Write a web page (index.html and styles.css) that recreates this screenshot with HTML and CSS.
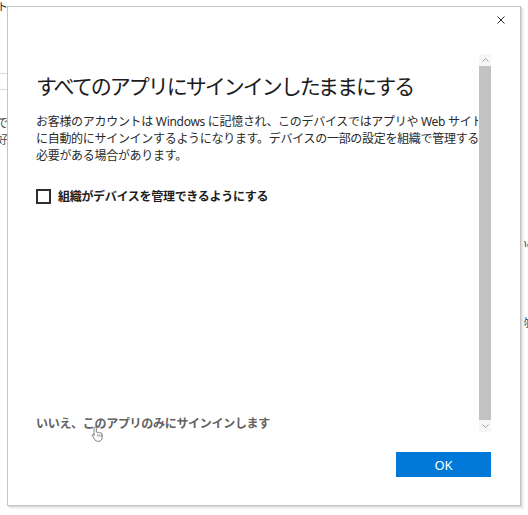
FILE: index.html
```html
<!DOCTYPE html>
<html lang="ja">
<head>
<meta charset="utf-8">
<title>サインイン</title>
<link rel="stylesheet" href="styles.css">
</head>
<body>
<div class="backdrop">
  <div class="pane-left">
    <div class="frag frag-top"><span>ト</span></div>
    <div class="rule rule-a"></div>
    <div class="rule rule-b"></div>
    <div class="frag frag-text"><span>設定で</span></div>
    <div class="frag frag-text2"><span>お好</span></div>
  </div>
  <div class="pane-mid"></div>
  <div class="pane-right">
    <div class="rfrag rfrag-a">name</div>
    <div class="rfrag rfrag-b">称号</div>
  </div>
</div>

<div class="dialog" role="dialog">
  <div class="titlebar">
    <svg class="close" width="8" height="8" viewBox="0 0 8 8" aria-label="閉じる">
      <path d="M0.5 0.5 L7.5 7.5 M7.5 0.5 L0.5 7.5" stroke="#2b2b2b" stroke-width="1" fill="none"/>
    </svg>
  </div>
  <div class="body">
    <div class="content">
      <h1 class="title">すべてのアプリにサインインしたままにする</h1>
      <div class="para">
        <div class="line">お客様のアカウントは Windows に記憶され、このデバイスではアプリや Web サイト</div>
        <div class="line">に自動的にサインインするようになります。デバイスの一部の設定を組織で管理する</div>
        <div class="line">必要がある場合があります。</div>
      </div>
      <label class="check">
        <span class="box"></span>
        <span class="check-label">組織がデバイスを管理できるようにする</span>
      </label>
      <div class="link">いいえ、このアプリのみにサインインします</div>
    </div>
    <div class="scrollbar">
      <div class="arrow">
        <svg width="7" height="4" viewBox="0 0 7 4"><path d="M0.5 3.5 L3.5 0.5 L6.5 3.5" stroke="#a0a0a0" fill="none"/></svg>
      </div>
      <div class="thumb"></div>
      <div class="arrow">
        <svg width="7" height="4" viewBox="0 0 7 4"><path d="M0.5 0.5 L3.5 3.5 L6.5 0.5" stroke="#a0a0a0" fill="none"/></svg>
      </div>
    </div>
  </div>
  <div class="footer">
    <button class="ok">OK</button>
  </div>
  <svg class="cursor" width="13" height="18" viewBox="0 0 17 22">
    <path d="M5.5 1.5c.8 0 1.5.6 1.5 1.5v5.5h.5c.8 0 1.3.5 1.5 1 .3-.4.8-.6 1.3-.6.8 0 1.3.5 1.5 1.1.3-.3.7-.5 1.2-.5 1 0 1.5.8 1.5 1.6V16c0 2.5-1.7 4.5-4.2 4.5H8.5c-1.5 0-2.5-.7-3.3-1.8L1.8 13.5c-.5-.8-.3-1.6.4-2 .7-.4 1.5-.2 2 .5L4 13V3c0-.9.7-1.5 1.5-1.5z" fill="#fff" stroke="#6a6a6a" stroke-width="1.1"/>
    <path d="M9 11v3.5M11.5 11.5v3M14 12v2.5" stroke="#6a6a6a" stroke-width="1"/>
  </svg>
</div>
</body>
</html>
```
FILE: styles.css
```css
* { box-sizing: border-box; }
html, body {
  margin: 0;
  padding: 0;
  background: #ffffff;
}
body {
  width: 528px;
  height: 515px;
  overflow: hidden;
  font-family: "Noto Sans", "Noto Sans CJK JP", sans-serif;
  position: relative;
}

/* background application behind the dialog */
.backdrop {
  display: flex;
  height: 515px;
}
.pane-left {
  width: 8px;
  overflow: hidden;
  position: relative;
}
.frag {
  display: flex;
  justify-content: flex-end;
  white-space: nowrap;
  color: #444;
  font-size: 11px;
  line-height: 14px;
}
.frag-top { margin-top: 0; height: 14px; color: #222; }
.rule { height: 1px; background: #dcdcdc; width: 8px; }
.rule-a { margin-top: 59px; }
.rule-b { margin-top: 15px; }
.frag-text { margin-top: 26px; }
.frag-text2 { margin-top: 3px; }
.pane-mid { width: 512px; }
.pane-right {
  flex: 1;
  overflow: hidden;
  white-space: nowrap;
  color: #444;
  font-size: 11px;
  line-height: 14px;
}
.rfrag-a { margin-top: 236px; }
.rfrag-b { margin-top: 66px; }

/* dialog */
.dialog {
  position: absolute;
  left: 7px;
  top: 6px;
  width: 514px;
  background: #ffffff;
  border: 1px solid #c4c4c4;
  box-shadow: 1px 1px 0 #dadada, 2px 2px 0 #ececec, 3px 3px 1px #f4f4f4;
  display: flex;
  flex-direction: column;
}
.titlebar {
  height: 47px;
  display: flex;
  justify-content: flex-end;
  align-items: flex-start;
  padding: 9px 15px 0 0;
}
.close { display: block; }

.body {
  height: 378px;
  display: flex;
}
.content {
  flex: 1;
  min-width: 0;
  overflow: hidden;
  padding: 18px 0 0 28px;
  display: flex;
  flex-direction: column;
}
.title {
  margin: 0;
  font-size: 21px;
  line-height: 28px;
  font-weight: 400;
  letter-spacing: -2px;
  color: #1b1b1b;
  white-space: nowrap;
}
.para {
  margin-top: 13px;
  font-size: 12px;
  line-height: 17px;
  letter-spacing: -0.3px;
  color: #2a2a2a;
}
.line { white-space: nowrap; }

.check {
  margin-top: 22px;
  height: 20px;
  display: flex;
  align-items: center;
  gap: 7px;
}
.box {
  width: 15px;
  height: 15px;
  border: 2px solid #2e2e2e;
  background: #fff;
  flex: none;
}
.check-label {
  font-size: 12px;
  font-weight: 700;
  letter-spacing: -0.3px;
  color: #1e1e1e;
  white-space: nowrap;
}
.link {
  margin-top: auto;
  font-size: 12px;
  line-height: 16px;
  font-weight: 700;
  letter-spacing: -0.3px;
  color: #626262;
  white-space: nowrap;
}

.scrollbar {
  width: 12px;
  margin-left: 1px;
  margin-right: 29px;
  display: flex;
  flex-direction: column;
  background: #f3f3f3;
}
.arrow {
  height: 12px;
  display: flex;
  align-items: center;
  justify-content: center;
  background: #f6f6f6;
}
.arrow svg { display: block; }
.thumb {
  flex: 1;
  background: #c2c2c2;
}

.footer {
  display: flex;
  justify-content: flex-end;
  padding: 20px 29px 28px 0;
}
.ok {
  width: 95px;
  height: 25px;
  border: none;
  margin: 0;
  background: #0078d7;
  color: #ffffff;
  font-family: "Noto Sans", "Noto Sans CJK JP", sans-serif;
  font-size: 13px;
  padding: 0;
}

.cursor {
  position: absolute;
  left: 83px;
  top: 418px;
}
```
